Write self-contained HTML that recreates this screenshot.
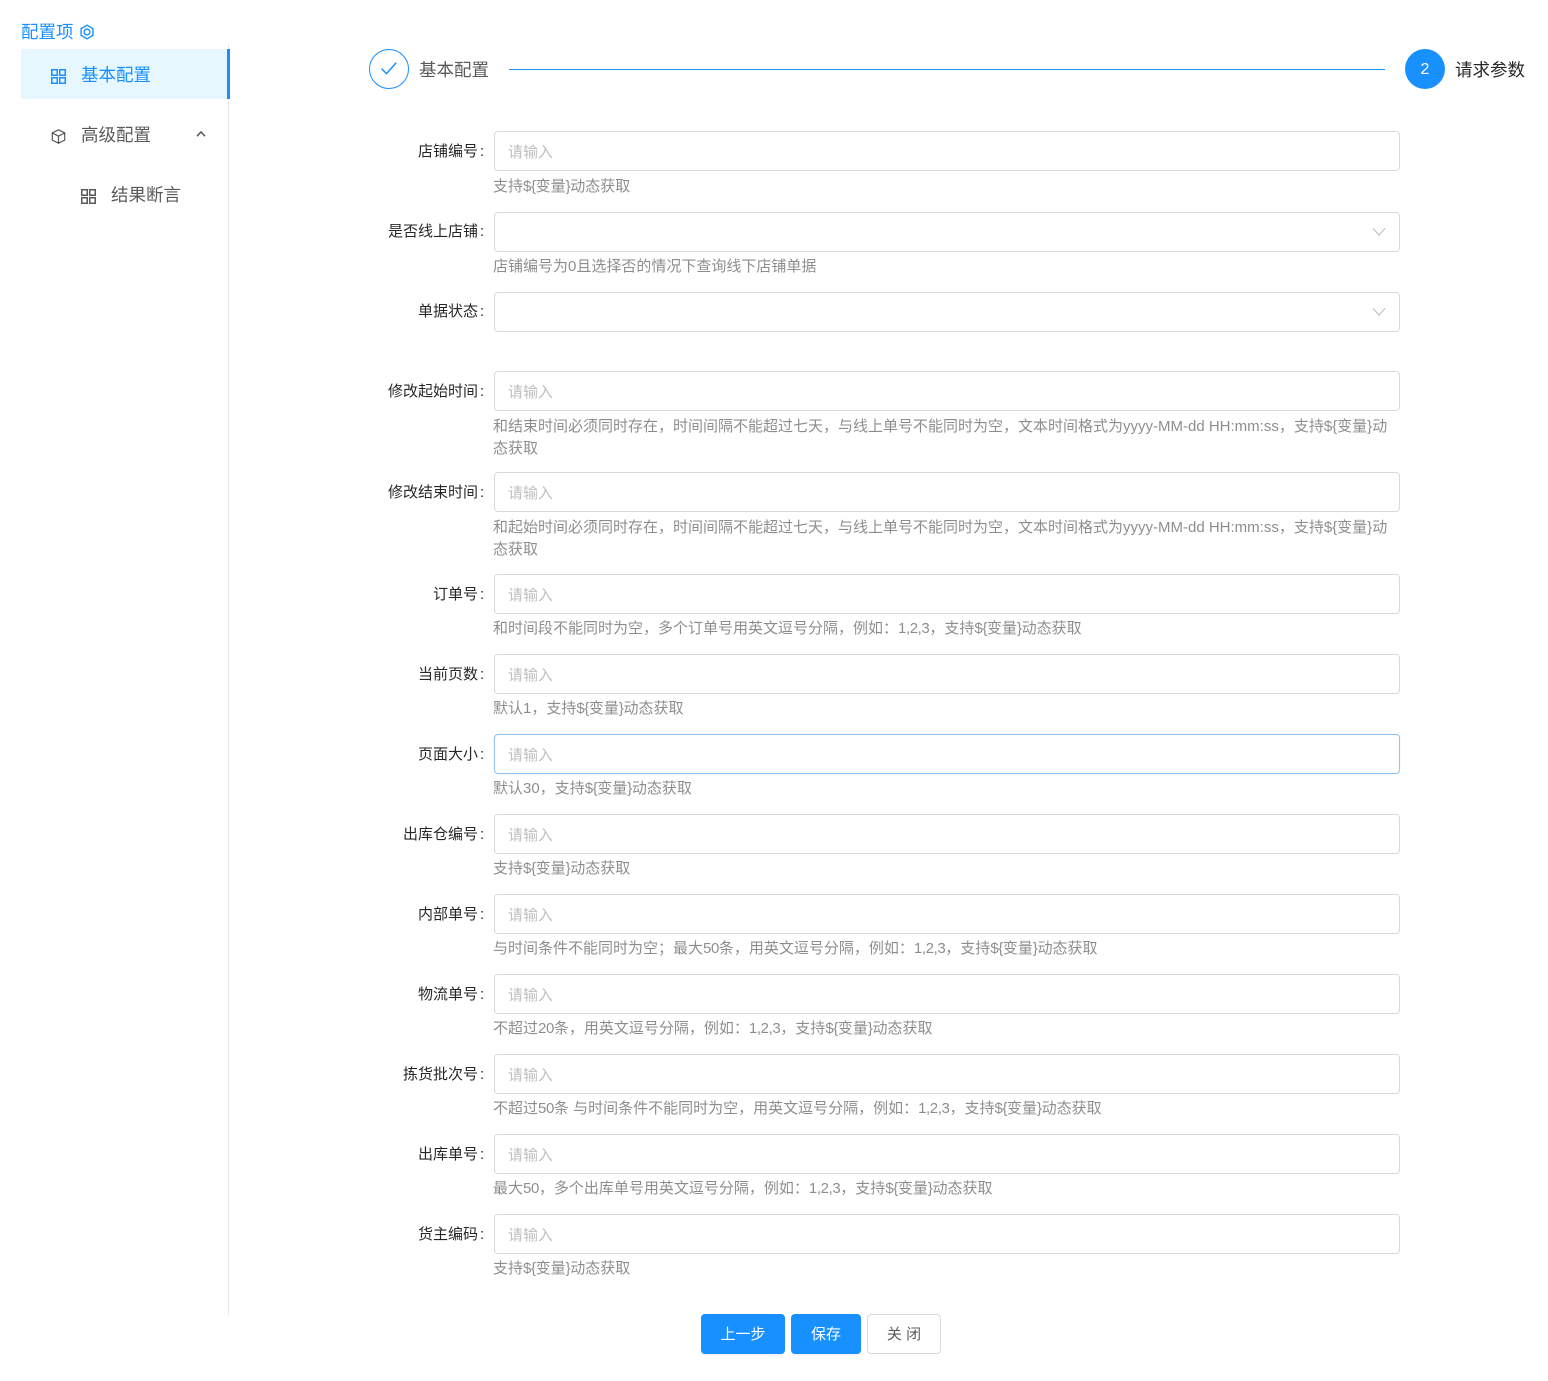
<!DOCTYPE html>
<html lang="zh-CN">
<head>
<meta charset="utf-8">
<title>配置项</title>
<style>
html,body{margin:0;padding:0;background:#fff;}
body{position:relative;width:1548px;height:1381px;overflow:hidden;font-family:"Liberation Sans","Noto Sans CJK SC",sans-serif;font-size:15px;color:rgba(0,0,0,.65);}
.a{position:absolute;white-space:nowrap;}
.lb{position:absolute;left:330px;width:148px;text-align:right;font-size:15px;line-height:22px;color:rgba(0,0,0,.85);white-space:nowrap;}
.lb i{position:absolute;left:150px;top:0;font-style:normal;}
.in{position:absolute;left:494px;width:904px;height:38px;border:1px solid #d9d9d9;border-radius:4px;background:#fff;}
.in span{position:absolute;left:13px;top:10px;line-height:22px;color:#bfbfbf;font-size:15px;}
.in svg{position:absolute;left:877px;top:14px;}
.foc{border-color:#8fc4f3;box-shadow:0 0 1px rgba(24,144,255,.25);}
.h{position:absolute;left:493px;font-size:15px;line-height:22.5px;color:rgba(0,0,0,.45);white-space:nowrap;}
.s{letter-spacing:-.4px;}
.m{position:absolute;font-size:17.5px;line-height:26px;white-space:nowrap;}
.btn{position:absolute;top:1314px;height:40px;line-height:39px;border-radius:4px;text-align:center;font-size:15px;box-sizing:border-box;}
.p{background:#1890ff;color:#fff;box-shadow:0 2px 0 rgba(0,0,0,.035);line-height:41px;}
</style>
</head>
<body>

<div class="a" style="left:21px;top:20px;font-size:17.5px;line-height:24px;color:#1890ff;">配置项</div>
<svg class="a" style="left:79px;top:24px" width="16" height="16" viewBox="0 0 16 16" fill="none" stroke="#1890ff" stroke-width="1.4"><path d="M8 1.2l5.9 3.4v6.8L8 14.8l-5.9-3.4V4.6z"/><circle cx="8" cy="8" r="2.9"/></svg>

<div class="a" style="left:228px;top:44px;width:1px;height:1271px;background:#e8e8e8;"></div>
<div class="a" style="left:21px;top:49px;width:209px;height:50px;background:#e6f7ff;"></div>
<div class="a" style="left:227px;top:49px;width:3px;height:50px;background:#1890ff;"></div>

<svg class="a" style="left:51px;top:69px" width="15" height="15" viewBox="0 0 15 15" fill="none" stroke="#1890ff" stroke-width="1.5"><rect x=".75" y=".75" width="5.5" height="5.5"/><rect x="8.75" y=".75" width="5.5" height="5.5"/><rect x=".75" y="8.75" width="5.5" height="5.5"/><rect x="8.75" y="8.75" width="5.5" height="5.5"/></svg>
<div class="m" style="left:81px;top:62px;color:#1890ff;">基本配置</div>

<svg class="a" style="left:51px;top:129px" width="15" height="15" viewBox="0 0 15 15" fill="none" stroke="rgba(0,0,0,.65)" stroke-width="1.2"><path d="M7.5 .8l6.2 3.1v7.2l-6.2 3.1-6.2-3.1V3.9z"/><path d="M1.4 4l6.1 3.2L13.6 4M7.5 7.2v7"/></svg>
<div class="m" style="left:81px;top:122px;color:rgba(0,0,0,.65);">高级配置</div>
<svg class="a" style="left:196px;top:130px" width="10" height="8" viewBox="0 0 10 8" fill="none" stroke="rgba(0,0,0,.65)" stroke-width="1.5"><path d="M1 6.2L5 2l4 4.2"/></svg>

<svg class="a" style="left:81px;top:189px" width="15" height="15" viewBox="0 0 15 15" fill="none" stroke="rgba(0,0,0,.65)" stroke-width="1.5"><rect x=".75" y=".75" width="5.5" height="5.5"/><rect x="8.75" y=".75" width="5.5" height="5.5"/><rect x=".75" y="8.75" width="5.5" height="5.5"/><rect x="8.75" y="8.75" width="5.5" height="5.5"/></svg>
<div class="m" style="left:111px;top:182px;color:rgba(0,0,0,.65);">结果断言</div>

<div class="a" style="left:369px;top:49px;width:38px;height:38px;border:1px solid #1890ff;border-radius:50%;"></div>
<svg class="a" style="left:380px;top:61px" width="18" height="15" viewBox="0 0 18 15" fill="none" stroke="#1890ff" stroke-width="1.5"><path d="M1.5 7.6l5 5L16.2 1.8"/></svg>
<div class="m" style="left:419px;top:57px;color:rgba(0,0,0,.65);">基本配置</div>
<div class="a" style="left:509px;top:69px;width:876px;height:1px;background:#1890ff;"></div>
<div class="a" style="left:1405px;top:49px;width:40px;height:40px;border-radius:50%;background:#1890ff;color:#fff;text-align:center;font-size:16px;line-height:41px;">2</div>
<div class="m" style="left:1455px;top:57px;color:rgba(0,0,0,.85);">请求参数</div>

<div class="lb" style="top:141px;">店铺编号<i>:</i></div>
<div class="in" style="top:131px;"><span>请输入</span></div>
<div class="h" style="top:176px;">支持<span class="s">${</span>变量<span class="s">}</span>动态获取</div>

<div class="lb" style="top:221px;">是否线上店铺<i>:</i></div>
<div class="in" style="top:212px;"><svg width="14" height="10" viewBox="0 0 14 10" fill="none" stroke="#c4c4c4" stroke-width="1.2"><path d="M1 1.2l6 7 6-7"/></svg></div>
<div class="h" style="top:256px;">店铺编号为0且选择否的情况下查询线下店铺单据</div>

<div class="lb" style="top:301px;">单据状态<i>:</i></div>
<div class="in" style="top:292px;"><svg width="14" height="10" viewBox="0 0 14 10" fill="none" stroke="#c4c4c4" stroke-width="1.2"><path d="M1 1.2l6 7 6-7"/></svg></div>

<div class="lb" style="top:381px;">修改起始时间<i>:</i></div>
<div class="in" style="top:371px;"><span>请输入</span></div>
<div class="h" style="top:416px;line-height:22px;">和结束时间必须同时存在，时间间隔不能超过七天，与线上单号不能同时为空，文本时间格式为yyyy-MM-dd HH:mm:ss，支持${变量}动<br>态获取</div>

<div class="lb" style="top:482px;">修改结束时间<i>:</i></div>
<div class="in" style="top:472px;"><span>请输入</span></div>
<div class="h" style="top:517px;line-height:22px;">和起始时间必须同时存在，时间间隔不能超过七天，与线上单号不能同时为空，文本时间格式为yyyy-MM-dd HH:mm:ss，支持${变量}动<br>态获取</div>

<div class="lb" style="top:584px;">订单号<i>:</i></div>
<div class="in" style="top:574px;"><span>请输入</span></div>
<div class="h" style="top:618px;">和时间段不能同时为空，多个订单号用英文逗号分隔，例如：<span class="s">1,2,3</span>，支持<span class="s">${</span>变量<span class="s">}</span>动态获取</div>

<div class="lb" style="top:664px;">当前页数<i>:</i></div>
<div class="in" style="top:654px;"><span>请输入</span></div>
<div class="h" style="top:698px;">默认1，支持<span class="s">${</span>变量<span class="s">}</span>动态获取</div>

<div class="lb" style="top:744px;">页面大小<i>:</i></div>
<div class="in foc" style="top:734px;"><span>请输入</span></div>
<div class="h" style="top:778px;">默认30，支持<span class="s">${</span>变量<span class="s">}</span>动态获取</div>

<div class="lb" style="top:824px;">出库仓编号<i>:</i></div>
<div class="in" style="top:814px;"><span>请输入</span></div>
<div class="h" style="top:858px;">支持<span class="s">${</span>变量<span class="s">}</span>动态获取</div>

<div class="lb" style="top:904px;">内部单号<i>:</i></div>
<div class="in" style="top:894px;"><span>请输入</span></div>
<div class="h" style="top:938px;">与时间条件不能同时为空；最大<span class="s">50</span>条，用英文逗号分隔，例如：<span class="s">1,2,3</span>，支持<span class="s">${</span>变量<span class="s">}</span>动态获取</div>

<div class="lb" style="top:984px;">物流单号<i>:</i></div>
<div class="in" style="top:974px;"><span>请输入</span></div>
<div class="h" style="top:1018px;">不超过<span class="s">20</span>条，用英文逗号分隔，例如：<span class="s">1,2,3</span>，支持<span class="s">${</span>变量<span class="s">}</span>动态获取</div>

<div class="lb" style="top:1064px;">拣货批次号<i>:</i></div>
<div class="in" style="top:1054px;"><span>请输入</span></div>
<div class="h" style="top:1098px;">不超过<span class="s">50</span>条 与时间条件不能同时为空，用英文逗号分隔，例如：<span class="s">1,2,3</span>，支持<span class="s">${</span>变量<span class="s">}</span>动态获取</div>

<div class="lb" style="top:1144px;">出库单号<i>:</i></div>
<div class="in" style="top:1134px;"><span>请输入</span></div>
<div class="h" style="top:1178px;">最大<span class="s">50</span>，多个出库单号用英文逗号分隔，例如：<span class="s">1,2,3</span>，支持<span class="s">${</span>变量<span class="s">}</span>动态获取</div>

<div class="lb" style="top:1224px;">货主编码<i>:</i></div>
<div class="in" style="top:1214px;"><span>请输入</span></div>
<div class="h" style="top:1258px;">支持<span class="s">${</span>变量<span class="s">}</span>动态获取</div>

<div class="btn p" style="left:701px;width:84px;">上一步</div>
<div class="btn p" style="left:791px;width:70px;">保存</div>
<div class="btn" style="left:867px;width:74px;border:1px solid #d9d9d9;color:rgba(0,0,0,.65);">关 闭</div>

</body>
</html>
